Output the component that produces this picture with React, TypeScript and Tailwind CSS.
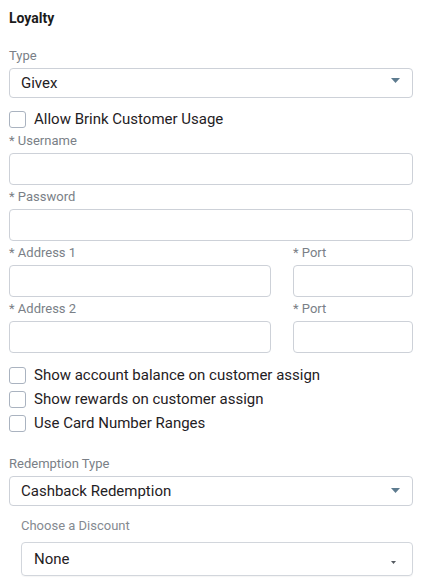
import React from "react";

const font = { fontFamily: "Roboto, 'Noto Sans', sans-serif" };

function Label({ children }: { children: React.ReactNode }) {
  return (
    <div className="h-[24px] flex items-center text-[13px] leading-[16px] text-[#7a7f87]">
      {children}
    </div>
  );
}

function Input({ className = "" }: { className?: string }) {
  return (
    <div
      className={
        "h-[32px] rounded-[4px] border border-[#cdd1d8] bg-white " + className
      }
    />
  );
}

function Check({ label }: { label: string }) {
  return (
    <div className="h-[24px] flex items-center">
      <div className="w-[17px] h-[17px] rounded-[3px] border-[1.5px] border-[#aab3c0] bg-white" />
      <span className="ml-[8px] text-[15px] leading-[18px] text-[#1f2124]">
        {label}
      </span>
    </div>
  );
}

export default function App() {
  return (
    <div className="w-[432px] h-[585px] bg-white overflow-hidden" style={font}>
      <div className="pl-[9px] pr-[19px]">
        <div className="pt-[8px] h-[44px]">
          <div className="text-[14px] leading-[20px] font-bold text-[#1b1b1b]">
            Loyalty
          </div>
        </div>
        <Label>Type</Label>
        <div className="h-[30px] rounded-[4px] border border-[#cdd1d8] flex items-center pl-[11px] pr-[12px]">
          <span className="flex-1 text-[15px] text-[#1f2124]">Givex</span>
          <svg width="9" height="5" viewBox="0 0 9 5" className="-mt-[5px]">
            <path d="M0 0 L9 0 L4.5 5 Z" fill="#5d7b8f" />
          </svg>
        </div>
        <div className="mt-[11px] h-[20px] flex items-center">
          <div className="w-[17px] h-[17px] rounded-[3px] border-[1.5px] border-[#aab3c0] bg-white" />
          <span className="ml-[8px] text-[15px] leading-[18px] text-[#1f2124]">
            Allow Brink Customer Usage
          </span>
        </div>
        <Label>* Username</Label>
        <Input />
        <Label>* Password</Label>
        <Input />
        <div className="flex gap-[22px]">
          <div className="flex-1">
            <Label>* Address 1</Label>
            <Input />
          </div>
          <div className="w-[120px]">
            <Label>* Port</Label>
            <Input />
          </div>
        </div>
        <div className="flex gap-[22px]">
          <div className="flex-1">
            <Label>* Address 2</Label>
            <Input className="h-[31px]" />
          </div>
          <div className="w-[120px]">
            <Label>* Port</Label>
            <Input className="h-[31px]" />
          </div>
        </div>
        <div className="mt-[10px]">
          <Check label="Show account balance on customer assign" />
          <Check label="Show rewards on customer assign" />
          <Check label="Use Card Number Ranges" />
        </div>
        <div className="mt-[17px]">
          <Label>Redemption Type</Label>
          <div className="h-[30px] rounded-[4px] border border-[#cdd1d8] flex items-center pl-[11px] pr-[12px]">
            <span className="flex-1 text-[15px] text-[#1f2124]">
              Cashback Redemption
            </span>
            <svg width="9" height="5" viewBox="0 0 9 5" className="-mt-[1px]">
              <path d="M0 0 L9 0 L4.5 5 Z" fill="#5d7b8f" />
            </svg>
          </div>
        </div>
        <div className="ml-[12px] pt-[12px]">
          <div className="text-[13px] leading-[16px] text-[#858a91] mb-[8px]">
            Choose a Discount
          </div>
          <div className="h-[34px] rounded-[4px] border border-[#d2d6dc] shadow-[0_1px_1px_rgba(0,0,0,0.04)] flex items-center pl-[12px] pr-[16px]">
            <span className="flex-1 text-[15px] text-[#1f2124]">None</span>
            <svg width="5" height="3" viewBox="0 0 5 3" className="mt-[6px]">
              <path d="M0 0 L5 0 L2.5 3 Z" fill="#555a60" />
            </svg>
          </div>
        </div>
      </div>
    </div>
  );
}
